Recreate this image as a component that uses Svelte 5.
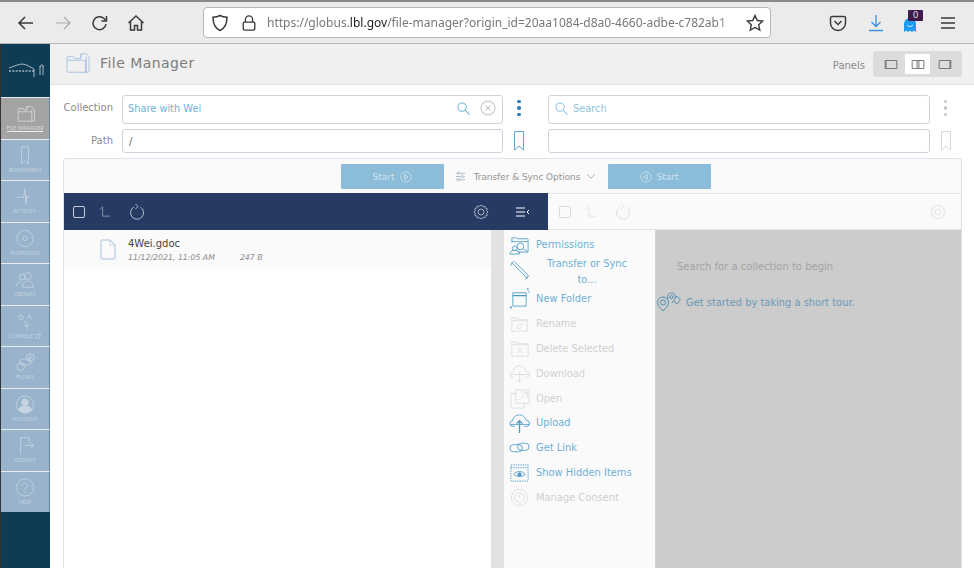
<script>
  const nav = [
    { label: 'FILE MANAGER', icon: 'folder', active: true },
    { label: 'BOOKMARKS', icon: 'bookmark' },
    { label: 'ACTIVITY', icon: 'activity' },
    { label: 'ENDPOINTS', icon: 'endpoints' },
    { label: 'GROUPS', icon: 'groups' },
    { label: 'CONSOLE', icon: 'console' },
    { label: 'FLOWS', icon: 'flows' },
    { label: 'ACCOUNT', icon: 'account' },
    { label: 'LOGOUT', icon: 'logout' },
    { label: 'HELP', icon: 'help' }
  ];
  const actions = [
    { label: 'Permissions', icon: 'perm', on: true },
    { label: 'Transfer or Sync to...', icon: 'transfer', on: true, tall: true },
    { label: 'New Folder', icon: 'newfolder', on: true },
    { label: 'Rename', icon: 'rename' },
    { label: 'Delete Selected', icon: 'delete' },
    { label: 'Download', icon: 'download' },
    { label: 'Open', icon: 'open' },
    { label: 'Upload', icon: 'upload', on: true },
    { label: 'Get Link', icon: 'link', on: true },
    { label: 'Show Hidden Items', icon: 'eye', on: true },
    { label: 'Manage Consent', icon: 'consent' }
  ];
</script>

{#snippet navIcon(name)}
  <svg class="nav-ico" viewBox="0 0 28 24" fill="none" stroke="currentColor" stroke-width="1">
    {#if name === 'folder'}
      <path d="M6 8V7a1 1 0 0 1 1-1h5l1 2h3V4h6l3 3v13a1 1 0 0 1-1 1H7a1 1 0 0 1-1-1z"/><path d="M6 10h16v11M16 4v4M22 7v3"/>
    {:else if name === 'bookmark'}
      <path d="M10 2h8v20l-4-4-4 4z"/>
    {:else if name === 'activity'}
      <path d="M4 13h8l1-3 1-7 1 18 1-10 1 2h2"/>
    {:else if name === 'endpoints'}
      <circle cx="14" cy="12" r="9.500"/><circle cx="14" cy="12" r="2.500"/>
    {:else if name === 'groups'}
      <circle cx="11" cy="9" r="3.500"/><circle cx="17" cy="8" r="4"/><path d="M4 20c0-4 3-5 6-6M11 21c0-5 3-7 6-7s6 2 7 7z"/>
    {:else if name === 'console'}
      <circle cx="9" cy="7" r="2.500"/><path d="M11 9l4 5M19 4l-2 5M19 4l3 5M16 14v6M13 17h6"/>
    {:else if name === 'flows'}
      <circle cx="20" cy="6" r="4.500"/><circle cx="20" cy="6" r="1.500"/><rect x="8" y="8" width="13" height="7" rx="3.500"/><circle cx="9" cy="17" r="4.500"/>
    {:else if name === 'account'}
      <circle cx="14" cy="12" r="10"/><circle cx="14" cy="9.500" r="4" fill="currentColor"/><path d="M6 18c1-3 4-4 8-4s7 1 8 4c-2 2-5 3.500-8 3.500S8 20 6 18z" fill="currentColor"/>
    {:else if name === 'logout'}
      <path d="M9 22V3h10v6M14 12h10M21 9.500l3 2.500-3 2.500"/>
    {:else}
      <circle cx="14" cy="12" r="10"/><path d="M11 10c0-2 1.500-3 3-3s3 1 3 3-3 2-3 5M14 17v1.500"/>
    {/if}
  </svg>
{/snippet}

{#snippet actionIcon(name)}
  <svg class="act-ico" viewBox="0 0 22 22" fill="none" stroke="currentColor" stroke-width="0.9">
    {#if name === 'perm'}
      <path d="M3 9V4h5l1 1h10a1 1 0 0 1 1 1v12a1 1 0 0 1-1 1H9"/><path d="M3 8h17"/><circle cx="12" cy="13" r="3.500"/><circle cx="6" cy="15" r="2.500"/><path d="M1 21c0-3 2-4 5-4s5 1 5 4zM15 16c2 0 3 1 4 3"/>
    {:else if name === 'transfer'}
      <path d="M3 3l16 16M5 1L3 3l-1 3M17 20l2-1 1-3M6 2l15 15"/>
    {:else if name === 'newfolder'}
      <path d="M4 5h14v14H4z"/><path d="M4 8h14" stroke-width="1.300"/><path d="M19 2l2-1M20 4h2M19 1l1-1M1 20h2M2 19v3"/>
    {:else if name === 'rename'}
      <path d="M3 5h5l1 2h10v12H3zM3 8h16"/><path d="M8 16l1-3 4-2 1 1-2 4z"/>
    {:else if name === 'delete'}
      <path d="M3 4h5l1 2h11v13H3zM3 7h17M9 10l5 6M14 10l-5 6"/>
    {:else if name === 'download'}
      <path d="M6 15H4a3 3 0 0 1 0-6c0-4 4-6 7-6s6 2 7 6a3 3 0 0 1 1 6h-3M1 12h20M11 9v11M8 17l3 3 3-3"/>
    {:else if name === 'open'}
      <path d="M7 6H2v15h14v-5M7 2h14v14H7zM10 13L19 4M13 4h6v6"/>
    {:else if name === 'upload'}
      <path d="M6 15H4a3 3 0 0 1 0-6c0-4 4-6 7-6s6 2 7 6a3 3 0 0 1 1 6h-3M1 13h20"/><path d="M11 22V9M8 12l3-3 3 3" stroke-width="1.400"/>
    {:else if name === 'link'}
      <rect x="1" y="8" width="13" height="7.500" rx="3.700"/><rect x="9" y="6.500" width="12" height="7.500" rx="3.700"/>
    {:else if name === 'eye'}
      <path d="M2 3h18v17H2z" stroke-dasharray="1.500 1"/><path d="M2 6h18" stroke-dasharray="1.500 1"/><path d="M5 13c3-4 9-4 12 0-3 3-9 3-12 0z"/><circle cx="11" cy="13" r="1.800" fill="currentColor"/>
    {:else}
      <circle cx="11" cy="11" r="8.500"/><circle cx="11" cy="11" r="5"/><path d="M11 8v3"/>
    {/if}
  </svg>
{/snippet}

{#snippet paneBar()}
  <svg class="tick" viewBox="0 0 14 14" fill="none" stroke="currentColor"><rect x="1.500" y="1.500" width="11" height="11" rx="1.500"/></svg>
  <svg class="up" viewBox="0 0 14 14" fill="none" stroke="currentColor" stroke-width="0.900"><path d="M5 12V2M2 5l3-3M5 12h8"/></svg>
  <svg class="refresh" viewBox="0 0 16 16" fill="none" stroke="currentColor" stroke-width="0.900"><path d="M11.500 3.200a6.500 6.500 0 1 1-6.500 -.2M6.500 0L9 2.500 6.500 5"/></svg>
  <span class="grow"></span>
  <svg class="gear" viewBox="0 0 16 16" fill="none" stroke="currentColor" stroke-width="0.800"><path d="M8 1l1.500 1.400 2-.4.700 1.900 1.900.7-.4 2L15 8l-1.300 1.500.4 2-1.900.7-.7 1.900-2-.4L8 15l-1.500-1.300-2 .4-.7-1.900-1.900-.7.4-2L1 8l1.300-1.500-.4-2 1.900-.7.700-1.900 2 .4z"/><circle cx="8" cy="8" r="3"/></svg>
{/snippet}

<div class="browser">
  <div class="chrome">
    <svg class="tb back" viewBox="0 0 18 18" fill="none" stroke="currentColor" stroke-width="1.500"><path d="M16 9H2M8 3L2 9l6 6"/></svg>
    <svg class="tb fwd" viewBox="0 0 18 18" fill="none" stroke="currentColor" stroke-width="1.200"><path d="M2 9h14M10 3l6 6-6 6"/></svg>
    <svg class="tb reload" viewBox="0 0 18 18" fill="none" stroke="currentColor" stroke-width="1.500"><path d="M15 10a6.500 6.500 0 1 1-2-5.500L15.500 7"/><path d="M15.500 2v5h-5"/></svg>
    <svg class="tb home" viewBox="0 0 18 18" fill="none" stroke="currentColor" stroke-width="1.500"><path d="M1.500 9L9 2l7.500 7M3.500 7.500V16h4v-4.500h3V16h4V7.500"/></svg>
    <div class="urlbar">
      <svg class="shield" viewBox="0 0 18 18" fill="none" stroke="currentColor" stroke-width="1.500"><path d="M9 1.500c2 1.200 4 1.700 7 1.700 0 6-1.500 10.800-7 13.300-5.500-2.500-7-7.300-7-13.300 3 0 5-.5 7-1.700z"/></svg>
      <svg class="lock" viewBox="0 0 18 18" fill="none" stroke="currentColor" stroke-width="1.500"><rect x="2.500" y="8" width="13" height="9" rx="1.500"/><path d="M5 8V5a4 4 0 0 1 8 0v3"/></svg>
      <span class="url">https://globus.<b>lbl.gov</b>/file-manager?origin_id=20aa1084-d8a0-4660-adbe-c782ab1</span>
      <svg class="star" viewBox="0 0 18 18" fill="none" stroke="currentColor" stroke-width="1.400"><path d="M9 1.500l2.300 5 5.400.6-4 3.700 1.100 5.400L9 13.500l-4.800 2.700 1.100-5.400-4-3.700 5.400-.6z"/></svg>
    </div>
    <svg class="tb pocket" viewBox="0 0 18 18" fill="none" stroke="currentColor" stroke-width="1.500"><path d="M3 2.500h12a1.500 1.500 0 0 1 1.500 1.500v5a7.500 7.500 0 0 1-15 0V4A1.500 1.500 0 0 1 3 2.500z"/><path d="M5.500 7L9 10.500 12.500 7"/></svg>
    <svg class="tb dl" viewBox="0 0 18 18" fill="none" stroke="currentColor" stroke-width="1.300"><path d="M9 1v11M4.500 8L9 12.500 13.500 8M2 16.500h14"/></svg>
    <div class="ghost">
      <svg viewBox="0 0 14 16"><path fill="#1a9bf0" d="M1 7a6 6 0 0 1 12 0v8l-2-1.500L9 15l-2-1.500L5 15l-2-1.500L1 15z"/><path d="M4 8c1 2 5 2 6 0" stroke="#cdeaff" fill="none"/></svg>
      <span class="badge">0</span>
    </div>
    <svg class="tb menu" viewBox="0 0 18 18" fill="none" stroke="currentColor" stroke-width="1.500"><path d="M2 4h14M2 9h14M2 14h14"/></svg>
  </div>

  <div class="page">
    <nav class="side">
      <div class="logo">
        <svg viewBox="0 0 36 24" fill="none" stroke="#e4edf2" stroke-width="0.700"><path d="M1 8c6-2 10-4 13-4 4 0 8 3 12 5"/><path d="M1 11h25" stroke-dasharray="2 1.300" stroke-width="1"/><path d="M26 9v8M32 15V6M35 15V6M32 7c1-3 3-3 3 0"/></svg>
      </div>
      {#each nav as n}
        <div class="nav-item" class:active={n.active}>
          {@render navIcon(n.icon)}
          <span class="nav-label">{n.label}{#if n.icon === 'console'}<svg class="ext" viewBox="0 0 8 8" fill="none" stroke="currentColor" stroke-width="0.800"><path d="M1 2h5v5H1zM3 1h4v4"/></svg>{/if}</span>
        </div>
      {/each}
    </nav>

    <main class="main">
      <header class="head">
        <svg class="head-ico" viewBox="0 0 26 24" fill="none" stroke="#a9bfe0" stroke-width="1"><path d="M1 7V5a1 1 0 0 1 1-1h6l1 2h7V1h6l3 3v16a1 1 0 0 1-1 1H2a1 1 0 0 1-1-1z"/><path d="M1 8h20v13M16 1v5M22 4v18"/></svg>
        <h1>File Manager</h1>
        <span class="grow"></span>
        <span class="panels-label">Panels</span>
        <div class="panels">
          <span class="pbtn"><svg viewBox="0 0 14 10" fill="none" stroke="#666"><path d="M.5.500h13v9H.5z"/><path d="M1.500 1v8" /></svg></span>
          <span class="pbtn sel"><svg viewBox="0 0 14 10" fill="none" stroke="#666"><path d="M.5.500h13v9H.5zM6 1v8M8 1v8"/></svg></span>
          <span class="pbtn"><svg viewBox="0 0 14 10" fill="none" stroke="#666"><path d="M.5.500h13v9H.5z"/><path d="M12.500 1v8"/></svg></span>
        </div>
      </header>

      <section class="fields">
        <span class="flabel">Collection</span>
        <div class="box tall">
          <span class="val share">Share with Wei</span>
          <span class="grow"></span>
          <svg class="mag" viewBox="0 0 14 14" fill="none" stroke="#6db3d8" stroke-width="1.100"><circle cx="5.500" cy="5.500" r="4.500"/><path d="M9 9l4.500 4.500"/></svg>
          <svg class="clear" viewBox="0 0 16 16" fill="none" stroke="#bbb"><circle cx="8" cy="8" r="7"/><path d="M5.500 5.500l5 5M10.500 5.500l-5 5"/></svg>
        </div>
        <div class="dots on"><i></i><i></i><i></i></div>
        <div class="box tall">
          <svg class="mag" viewBox="0 0 14 14" fill="none" stroke="#8fc3e0" stroke-width="1.100"><circle cx="5.500" cy="5.500" r="4.500"/><path d="M9 9l4.500 4.500"/></svg>
          <span class="val search">Search</span>
        </div>
        <div class="dots"><i></i><i></i><i></i></div>

        <span class="flabel path-label">Path</span>
        <div class="box short"><span class="path">/</span></div>
        <svg class="mark on" viewBox="0 0 10 20" fill="none" stroke="#5ba6d2"><path d="M.5.500h9v18.500L5 15 .5 19z"/></svg>
        <div class="box short"></div>
        <svg class="mark" viewBox="0 0 10 20" fill="none" stroke="#d5d8dc"><path d="M.5.500h9v18.500L5 15 .5 19z"/></svg>
      </section>

      <section class="panel">
        <div class="startbar">
          <button class="start">Start <svg viewBox="0 0 14 14" fill="none" stroke="currentColor"><circle cx="7" cy="7" r="6"/><path d="M5.500 4l4 3-4 3z"/></svg></button>
          <span class="opts">
            <svg class="sliders" viewBox="0 0 12 12" fill="none" stroke="#aeb9c4"><path d="M1 2.500h10M1 6h10M1 9.500h10"/><circle cx="4" cy="2.500" r="1.300" fill="#eee"/><circle cx="8" cy="6" r="1.300" fill="#eee"/><circle cx="4" cy="9.500" r="1.300" fill="#eee"/></svg>
            <span class="opts-text">Transfer &amp; Sync Options</span>
            <svg class="chev" viewBox="0 0 10 6" fill="none" stroke="#94a5c6"><path d="M.5.500L5 5 9.500.500"/></svg>
          </span>
          <button class="start"><svg viewBox="0 0 14 14" fill="none" stroke="currentColor"><circle cx="7" cy="7" r="6"/><path d="M8.500 4l-4 3 4 3z"/></svg> Start</button>
        </div>
        <div class="bars">
          <div class="bar left">
            {@render paneBar()}
            <svg class="collapse" viewBox="0 0 14 10" fill="none" stroke="#fff"><path d="M0 1h9M0 5h9M0 9h9M13 3L11 5l2 2"/></svg>
          </div>
          <div class="bar right">{@render paneBar()}</div>
        </div>
        <div class="body">
          <div class="list">
            <div class="row">
              <svg class="file" viewBox="0 0 16 21" fill="none" stroke="#a9bfe0"><path d="M1 2a1 1 0 0 1 1-1h8l5 5v13a1 1 0 0 1-1 1H2a1 1 0 0 1-1-1z"/><path d="M10 1v5h5" stroke-width="0.600"/></svg>
              <div>
                <div class="fname">4Wei.gdoc</div>
                <div class="fmeta"><span>11/12/2021, 11:05 AM</span><span>247 B</span></div>
              </div>
            </div>
          </div>
          <div class="gutter"></div>
          <aside class="actions">
            {#each actions as a}
              <div class="action" class:on={a.on} class:tall={a.tall}>
                {@render actionIcon(a.icon)}
                <span>{a.label}</span>
              </div>
            {/each}
          </aside>
          <div class="dest">
            <p class="hint">Search for a collection to begin</p>
            <p class="tour">
              <svg viewBox="0 0 26 20" fill="none" stroke="#4f8fb4" stroke-width="1"><path d="M7 19c-3-3-5.500-5.500-5.500-8.500a5.500 5.500 0 0 1 11 0C12.500 13.500 10 16 7 19z"/><circle cx="7" cy="10.500" r="2.500"/><path d="M12 7c-1-3 0-6 3.500-6s4.500 3 3.500 6l-3 4M19 5c3-1 5 1 5 2.500S22 11 21 12l-3-3"/><circle cx="15.500" cy="5" r="1.500"/></svg>
              Get started by taking a short tour.
            </p>
          </div>
        </div>
      </section>
    </main>
  </div>
</div>

<style>
  :global(body) { margin: 0; background: #fff; overflow: hidden; }
  .browser { width: 974px; height: 568px; display: flex; flex-direction: column; overflow: hidden; font-family: "DejaVu Sans", sans-serif; }
  svg { display: block; flex: none; }
  .grow { flex: 1; }

  .chrome { height: 41px; flex: none; border-top: 2px solid #8a8a8a; border-bottom: 1px solid #b9b9b9; background: #ebebeb; display: flex; align-items: center; color: #3a3a3d; }
  .tb { width: 18px; height: 18px; }
  .back { margin-left: 17px; }
  .fwd { margin-left: 19px; color: #a9a9ab; }
  .reload { margin-left: 19px; }
  .home { margin-left: 18px; }
  .urlbar { width: 568px; height: 31px; box-sizing: border-box; background: #fff; border: 1px solid #b8b8ba; border-radius: 4px; display: flex; align-items: center; margin-left: 58px; padding-left: 7px; overflow: hidden; }
  .shield { width: 18px; height: 18px; }
  .lock { width: 16px; height: 18px; margin-left: 12px; }
  .url { font: 12px "Noto Sans", sans-serif; color: #77777a; margin-left: 10px; white-space: nowrap; width: 478px; flex: none; -webkit-mask-image: linear-gradient(90deg, #000 94%, rgba(0,0,0,.35)); mask-image: linear-gradient(90deg, #000 94%, rgba(0,0,0,.35)); }
  .url b { font-weight: 400; color: #222; }
  .star { width: 18px; height: 18px; margin-left: 1px; }
  .pocket { margin-left: 58px; }
  .dl { margin-left: 20px; color: #3b8ee0; }
  .ghost { margin-left: 18px; width: 20px; height: 28px; position: relative; }
  .ghost svg { position: absolute; left: 0; top: 8px; width: 14px; height: 16px; }
  .badge { position: absolute; left: 5px; top: 1px; width: 15px; height: 11px; background: #3f1a4e; color: #ddd; font: 9px/11px "DejaVu Sans", sans-serif; text-align: center; border-radius: 1px; }
  .menu { margin-left: 16px; }

  .page { flex: 1; display: flex; min-height: 0; }
  .side { width: 50px; flex: none; box-sizing: border-box; background: #0f3c55; border-left: 1px solid #333; display: flex; flex-direction: column; }
  .logo { height: 53px; flex: none; display: flex; align-items: center; justify-content: center; }
  .logo svg { width: 36px; height: 24px; margin-top: 3px; }
  .nav-item { height: 41.500px; box-sizing: border-box; flex: none; background: #9ab3cc; color: #c5d4e1; border-top: 1px solid #e6edf3; border-right: 1px solid #5f86a3; display: flex; flex-direction: column; align-items: center; padding-top: 5px; }
  .nav-item.active { background: #a3a3a3; color: #d8d8d8; }
  .nav-ico { width: 24px; height: 21px; }
  .nav-label { font: 5px/6px "Lato", sans-serif; margin-top: 1px; letter-spacing: .1px; display: flex; gap: 2px; white-space: nowrap; }
  .active .nav-label { border-bottom: 1px solid #eee; color: #ddd; }
  .ext { width: 6px; height: 6px; }

  .main { flex: 1; min-width: 0; display: flex; flex-direction: column; }
  .head { height: 40px; flex: none; background: #f0f0f0; border-bottom: 1px solid #dedede; display: flex; align-items: center; padding: 0 12px 0 16px; }
  .head-ico { width: 24px; height: 22px; }
  h1 { font: 400 14px "DejaVu Sans", sans-serif; letter-spacing: .45px; color: #7d7d7d; margin: -3px 0 0 10px; }
  .panels-label { font-size: 10px; color: #8a8a8a; margin: 3px 8px 0 0; }
  .panels { display: flex; background: #dcdcdc; border-radius: 2px; padding: 3px; }
  .pbtn { width: 29px; height: 20px; display: flex; align-items: center; justify-content: center; }
  .pbtn svg { width: 14px; height: 9px; }
  .pbtn.sel { width: 25px; background: #fff; }

  .fields { display: grid; grid-template-columns: 49px 10px 381px 45px 382px 31px; grid-template-rows: 29px 24px; row-gap: 5px; padding: 10px 0 5px 13px; align-items: center; justify-items: center; color: #888; }
  .flabel { grid-column: 1; font-size: 10px; justify-self: stretch; text-align: right; color: #8a8a8a; margin: 0 -1px 4px 0; }
  .path-label { margin-bottom: 2px; }
  .box { border: 1px solid #ccd3dc; border-radius: 3px; background: #fff; box-sizing: border-box; height: 100%; width: 100%; display: flex; align-items: center; padding: 0 6px; }
  .flabel + .box { grid-column: 3; }
  .tall { padding-bottom: 3px; }
  .val { font-size: 9.800px; color: #6db3d8; }
  .share { margin-left: -1px; }
  .search { margin-left: 5px; color: #8fc3e0; }
  .mag { width: 13px; height: 13px; }
  .clear { width: 16px; height: 16px; margin-left: 10px; margin-right: 0; }
  .path { font-size: 10px; color: #666; }
  .dots { display: flex; flex-direction: column; gap: 3px; align-items: center; margin-bottom: 3px; }
  .dots.on { justify-self: start; margin-left: 14px; }
  .dots i { width: 3.500px; height: 3.500px; border-radius: 50%; background: #c6c6c6; }
  .dots.on i { background: #1f7fc0; }
  .mark { width: 10px; height: 20px; }
  .mark.on { justify-self: start; margin-left: 11px; }

  .panel { flex: 1; min-height: 0; margin: 0 12px 0 13px; border: 1px solid #dfe2e6; border-bottom: 0; border-radius: 3px 3px 0 0; display: flex; flex-direction: column; background: #fafafa; }
  .startbar { height: 34px; flex: none; display: flex; justify-content: center; align-items: flex-start; padding: 5px 0 0 26px; box-sizing: border-box; }
  .start { width: 103px; height: 25px; border: 0; padding: 0; background: #8bbcd9; color: #cfe3ef; font: 9px "DejaVu Sans", sans-serif; display: flex; align-items: center; justify-content: center; gap: 5px; border-radius: 1px; }
  .start svg { width: 12px; height: 12px; }
  .opts { width: 164px; font-size: 8.900px; color: #939393; display: flex; align-items: center; justify-content: center; gap: 6px; height: 25px; white-space: nowrap; }
  .opts-text { margin-left: 2px; }
  .sliders { width: 11px; height: 11px; }
  .chev { width: 10px; height: 5px; }

  .bars { display: grid; grid-template-columns: 484px 1fr; height: 37px; flex: none; }
  .bar { display: flex; align-items: center; min-width: 0; }
  .left { background: #263a63; color: #c6ccd8; padding: 0 18px 0 8px; }
  .collapse { width: 14px; height: 10px; margin-left: 27px; }
  .right { background: #fafafa; color: #dadada; padding: 0 15px 0 10px; border-top: 1px solid #e2e2e2; border-bottom: 1px solid #e2e2e2; box-sizing: border-box; }
  .tick { width: 14px; height: 14px; }
  .up { width: 13px; height: 13px; margin-left: 12px; opacity: .7; }
  .refresh { width: 16px; height: 16px; margin-left: 18px; }
  .gear { width: 16px; height: 16px; }

  .body { flex: 1; min-height: 0; display: flex; }
  .list { width: 427px; flex: none; background: #fff; }
  .row { height: 39px; background: #fafafa; display: flex; padding-left: 36px; padding-top: 8px; box-sizing: border-box; gap: 12px; }
  .file { width: 16px; height: 21px; margin-top: 1px; }
  .fname { font-size: 10px; color: #444; }
  .fmeta { font: italic 7.800px "DejaVu Sans", sans-serif; color: #8a8a8a; margin-top: 4px; display: flex; gap: 25px; }
  .gutter { width: 13px; flex: none; background: #e2e2e2; }
  .actions { width: 152px; flex: none; background: #fafafa; border-right: 1px solid #d5d5d5; box-sizing: border-box; padding-top: 2px; }
  .action { height: 24.850px; display: flex; align-items: center; padding-left: 5px; gap: 6px; font-size: 9.900px; color: #d0d0d0; }
  .action.on { color: #6eb0d4; }
  .action.tall { height: 26.500px; }
  .action.tall span { text-align: center; width: 100px; line-height: 16px; margin: 3px 0 0 1px; }
  .act-ico { width: 21px; height: 21px; }
  .action:not(.on) .act-ico { color: #dcdcdc; }
  .action.on .act-ico { color: #4b9bc8; }
  .dest { flex: 1; background: #cccccc; padding-left: 21px; min-width: 0; }
  .hint { font-size: 10px; color: #a3a3a3; margin: 31px 0 0; }
  .tour { font-size: 9.900px; color: #6a9ab8; margin: 20px 0 0 -21px; display: flex; align-items: center; gap: 4px; }
  .tour svg { width: 26px; height: 20px; }
</style>
